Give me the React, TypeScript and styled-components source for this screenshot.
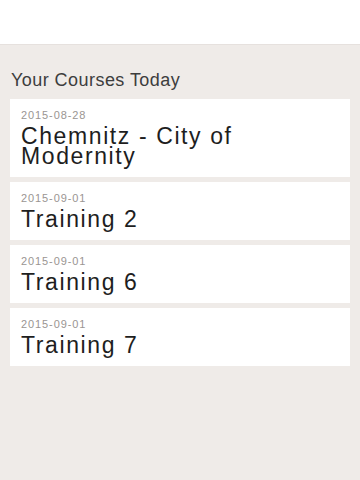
import styled, { createGlobalStyle } from 'styled-components'

const GlobalStyle = createGlobalStyle`
    html, body {
        margin: 0;
        padding: 0;
        background-color: #efebe8;
        font-family: "Liberation Sans", Arial, sans-serif;
    }
`

const Page = styled.div`
    width: 360px;
    min-height: 480px;
    background-color: #efebe8;
`

const Header = styled.div`
    height: 44px;
    background-color: #ffffff;
    border-bottom: 1px solid #e6e1de;
`

const Content = styled.div`
    padding: 25px 10px 10px;
`

const Heading = styled.h2`
    margin: 0 0 9px 1px;
    font-size: 18px;
    line-height: 20px;
    font-weight: normal;
    letter-spacing: 0.45px;
    color: #3d3d3d;
`

const List = styled.div`
    display: flex;
    flex-direction: column;
    gap: 5px;
`

const Card = styled.div`
    background-color: #ffffff;
    padding: 9px 10px 11px 11px;
`

const DateText = styled.div`
    font-size: 11px;
    line-height: 14px;
    letter-spacing: 0.9px;
    color: #9a9592;
    margin-bottom: 4px;
`

const Title = styled.div`
    font-size: 23px;
    line-height: 20px;
    letter-spacing: 1.6px;
    color: #1e1e1e;
`

const courses = [
    { date: '2015-08-28', name: 'Chemnitz - City of Modernity' },
    { date: '2015-09-01', name: 'Training 2' },
    { date: '2015-09-01', name: 'Training 6' },
    { date: '2015-09-01', name: 'Training 7' },
]

const App = () => {
    return (
        <Page>
            <GlobalStyle />
            <Header />
            <Content>
                <Heading>Your Courses Today</Heading>
                <List>
                    {courses.map((c, i) => (
                        <Card key={i}>
                            <DateText>{c.date}</DateText>
                            <Title>{c.name}</Title>
                        </Card>
                    ))}
                </List>
            </Content>
        </Page>
    )
}

export default App
